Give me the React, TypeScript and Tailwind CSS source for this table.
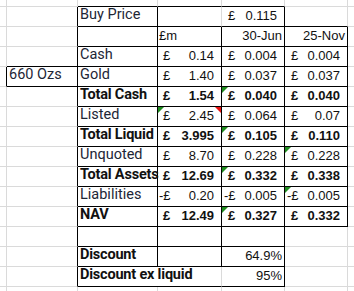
import type { ReactNode } from "react";

type Row = {
  label?: string;
  bold?: boolean;
  a?: string;
  c?: string | null;
  d?: string;
  e?: string;
  neg?: boolean;
};

const rows: Row[] = [
  { label: "Cash", c: "0.14", d: "0.004", e: "0.004" },
  { label: "Gold", a: "660 Ozs", c: "1.40", d: "0.037", e: "0.037" },
  { label: "Total Cash", bold: true, c: "1.54", d: "0.040", e: "0.040" },
  { label: "Listed", c: "2.45", d: "0.064", e: "0.07" },
  { label: "Total Liquid", bold: true, c: "3.995", d: "0.105", e: "0.110" },
  { label: "Unquoted", c: "8.70", d: "0.228", e: "0.228" },
  { label: "Total Assets", bold: true, c: "12.69", d: "0.332", e: "0.338" },
  { label: "Liabilities", neg: true, c: "0.20", d: "0.005", e: "0.005" },
  { label: "NAV", bold: true, c: "12.49", d: "0.327", e: "0.332" },
];

// green error markers (row index in grid, column index)
const green = ["6-3", "5-4", "7-4", "8-5", "9-4", "10-5", "11-4"];

function Money({ v, neg, bold, col }: { v: string; neg?: boolean; bold?: boolean; col: number }) {
  return (
    <div
      className={`flex w-full items-end justify-between font-['Liberation_Sans',Arial,sans-serif] text-[13px] leading-[15px] ${
        bold ? "font-bold" : ""
      } ${col === 3 ? "pl-[5px] pr-[7px]" : "pl-[6px] pr-[7px]"}`}
    >
      <span className={neg ? "-ml-[4px]" : ""}>{neg ? "-£" : "£"}</span>
      <span>{v}</span>
    </div>
  );
}

function Label({ text, bold }: { text: string; bold?: boolean }) {
  return (
    <span
      className={`whitespace-nowrap pl-[2px] font-['Roboto',sans-serif] text-[14.5px] leading-[16px] ${
        bold ? "font-bold tracking-[-0.2px] text-[#111]" : "text-[#1d2636]"
      }`}
    >
      {text}
    </span>
  );
}

function Num({ text }: { text: string }) {
  return (
    <span className="w-full pr-[2px] text-right font-['Liberation_Sans',Arial,sans-serif] text-[13px] leading-[15px]">
      {text}
    </span>
  );
}

function Tri({ color, right }: { color: string; right?: boolean }) {
  return (
    <span
      className={`absolute top-0 z-10 h-0 w-0 border-t-[6px] ${
        right
          ? "right-0 border-l-[6px] border-l-transparent"
          : "left-0 border-r-[6px] border-r-transparent"
      }`}
      style={{ borderTopColor: color }}
    />
  );
}

function content(r: number, c: number): ReactNode {
  if (r === 1 && c === 2) return <Label text="Buy Price" />;
  if (r === 1 && c === 4) return <Money v="0.115" col={4} />;
  if (r === 2 && c === 3)
    return (
      <span className="pl-[1px] font-['Liberation_Sans',Arial,sans-serif] text-[13px] leading-[15px]">£m</span>
    );
  if (r === 2 && c === 4) return <Num text="30-Jun" />;
  if (r === 2 && c === 5) return <Num text="25-Nov" />;
  if (r >= 3 && r <= 11) {
    const row = rows[r - 3];
    if (c === 1 && row.a) return <Label text={row.a} />;
    if (c === 2) return <Label text={row.label!} bold={row.bold} />;
    if (c === 3) return <Money v={row.c!} neg={row.neg} bold={row.bold} col={3} />;
    if (c === 4) return <Money v={row.d!} neg={row.neg} bold={row.bold} col={4} />;
    if (c === 5) return <Money v={row.e!} neg={row.neg} bold={row.bold} col={5} />;
  }
  if (r === 13 && c === 2) return <Label text="Discount" bold />;
  if (r === 13 && c === 4) return <Num text="64.9%" />;
  if (r === 14 && c === 2) return <Label text="Discount ex liquid" bold />;
  if (r === 14 && c === 4) return <Num text="95%" />;
  return null;
}

function borders(r: number, c: number): string {
  const inTable = r >= 1 && r <= 14;
  let right = false;
  let bottom = false;
  if (c === 0 && r === 4) right = true;
  if (c === 1 && (inTable || r === 4)) right = true;
  if (c === 1 && (r === 3 || r === 4)) bottom = true;
  if (c === 2 && r >= 1 && r <= 13) right = true;
  if (c === 2 || c === 3 || c === 4) {
    if (r >= 0 && r <= 14) bottom = true;
  }
  if (c === 3 && r >= 2 && r <= 14) right = true;
  if (c === 4 && inTable) right = true;
  if (c === 5 && r >= 2 && r <= 11) right = true;
  if (c === 5 && r >= 1 && r <= 11) bottom = true;
  return `${right ? "border-r-black" : "border-r-[#dadada]"} ${bottom ? "border-b-black" : "border-b-[#dadada]"}`;
}

export default function App() {
  const cells: ReactNode[] = [];
  for (let r = 0; r < 16; r++) {
    for (let c = 0; c < 7; c++) {
      if (r === 14 && c === 3) continue;
      const span = r === 14 && c === 2 ? "col-span-2" : "";
      const key = `${r}-${c}`;
      cells.push(
        <div
          key={key}
          className={`relative flex items-end overflow-visible whitespace-nowrap border-r border-b pb-[3px] text-[#111] ${span} ${borders(
            r,
            c
          )}`}
        >
          {content(r, c)}
          {green.includes(key) && <Tri color="#1e8c1e" />}
          {key === "6-3" && <Tri color="#e81010" right />}
        </div>
      );
    }
  }

  return (
    <div className="h-[291px] w-[354px] overflow-hidden bg-white">
      <div className="grid grid-cols-[7px_71px_80px_64px_63px_63px_64px] grid-rows-[7px_repeat(15,20px)]">
        {cells}
      </div>
    </div>
  );
}
